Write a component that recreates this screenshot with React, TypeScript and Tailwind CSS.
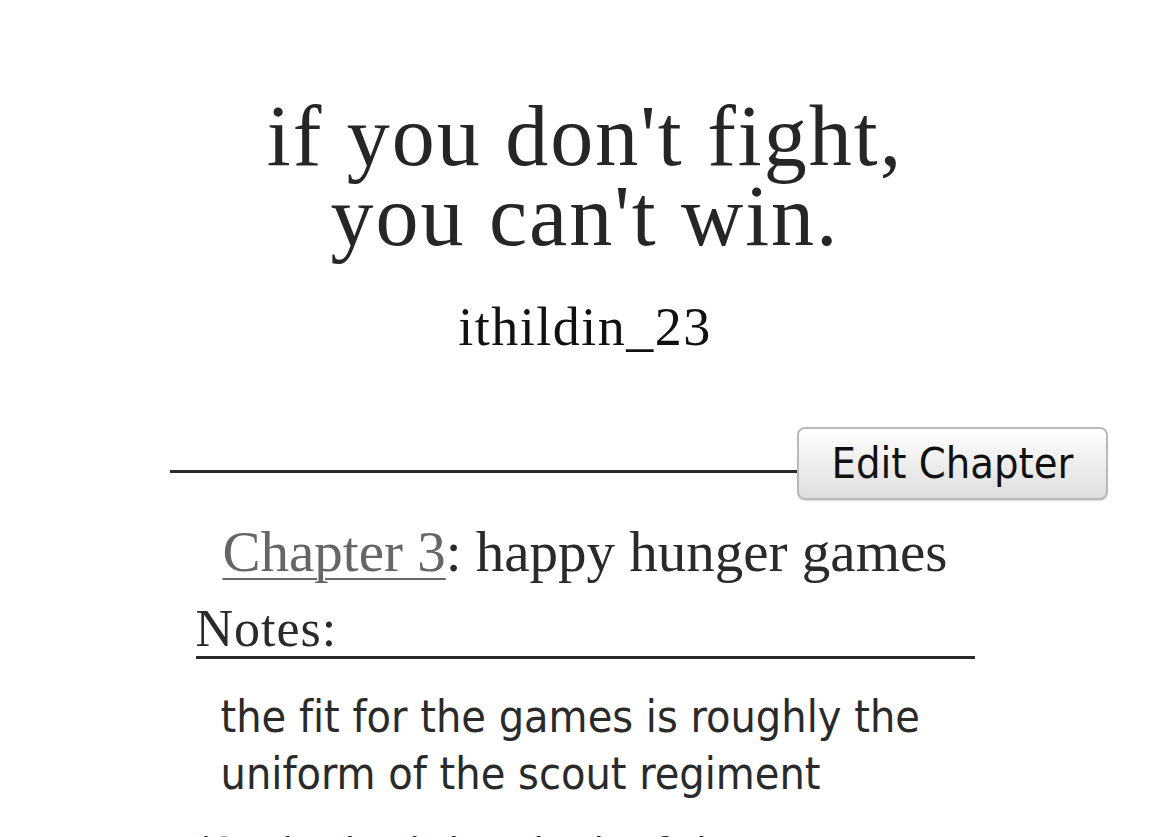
const serif = "font-['Liberation_Serif',serif]";
const sans = "font-['DejaVu_Sans',sans-serif] font-stretch-condensed [font-variant-ligatures:none]";

function WorkHeader() {
  return (
    <header className={`${serif} text-center`}>
      <h2 className="pt-[96px] text-[86px] leading-[80px] tracking-[2px] text-[#262626]">
        if you don't fight,
        <br />
        you can't win.
      </h2>
      <h3 className="mt-[39px] text-[54px] leading-[64px] tracking-[1.5px] text-[#111]">
        ithildin_23
      </h3>
    </header>
  );
}

function ChapterToolbar() {
  return (
    <div className="mt-[68px] ml-[170px] flex w-[938px] items-start">
      <div className="mt-[43px] h-[3px] flex-1 bg-[#2a2a2a]" />
      <button
        className={`${sans} h-[73px] w-[311px] rounded-[8px] border-2 border-[#b9b9b9] bg-linear-to-b from-white to-[#dedede] text-[43px] leading-none text-[#111] shadow-[0_1px_1px_rgba(0,0,0,0.15)]`}
      >
        Edit Chapter
      </button>
    </div>
  );
}

function ChapterBody() {
  return (
    <div className="mx-auto w-[779px]">
      <h3 className={`${serif} mt-[17px] text-center text-[57px] leading-[70px] text-[#2a2a2a]`}>
        <a className="text-[#666] underline decoration-[#666] decoration-2 underline-offset-[7px]">
          Chapter 3
        </a>
        : happy hunger games
      </h3>
      <h3 className={`${serif} mt-[14px] border-b-[3px] border-[#2a2a2a] text-[52px] leading-[55px] tracking-[1px] text-[#2a2a2a]`}>
        Notes:
      </h3>
      <blockquote className={`${sans} mt-[29px] ml-[25px] text-[44.5px] leading-[57px] text-[#2a2a2a]`}>
        <p>the fit for the games is roughly the uniform of the scout regiment</p>
      </blockquote>
      <p className={`${sans} mt-[24px] text-[44.5px] leading-[57px] text-[#2a2a2a]`}>
        (Sasha had the cloak of the scouts folded on her bed)
      </p>
    </div>
  );
}

export default function App() {
  return (
    <div className="h-[837px] overflow-hidden bg-white">
      <WorkHeader />
      <ChapterToolbar />
      <ChapterBody />
    </div>
  );
}
